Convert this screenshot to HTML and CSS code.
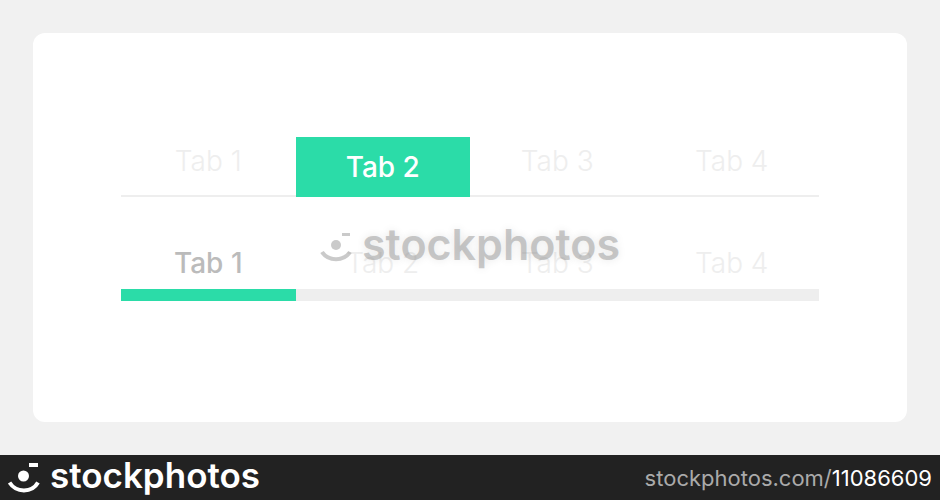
FILE: index.html
```html
<!DOCTYPE html>
<html lang="en">
  <head>
    <meta charset="utf-8" />
    <meta name="viewport" content="width=device-width, initial-scale=1" />
    <title>Tabs</title>
    <link rel="stylesheet" href="styles.css">
  </head>
  <body>
    <main class="stage">
      <section class="panel">
        <div class="tabs tabs-filled" role="tablist">
          <button class="tab" type="button" role="tab" aria-selected="false">Tab 1</button>
          <button class="tab active" type="button" role="tab" aria-selected="true">Tab 2</button>
          <button class="tab" type="button" role="tab" aria-selected="false">Tab 3</button>
          <button class="tab" type="button" role="tab" aria-selected="false">Tab 4</button>
        </div>
        <div class="tabs tabs-bar" role="tablist">
          <button class="tab active" type="button" role="tab" aria-selected="true">Tab 1</button>
          <button class="tab" type="button" role="tab" aria-selected="false">Tab 2</button>
          <button class="tab" type="button" role="tab" aria-selected="false">Tab 3</button>
          <button class="tab" type="button" role="tab" aria-selected="false">Tab 4</button>
        </div>
      </section>
    </main>
    <div class="brand watermark">
      <svg class="brand-icon" viewBox="0 0 32 30" aria-hidden="true">
        <rect x="22" y="1" width="8" height="3" />
        <circle cx="16" cy="13" r="5" />
        <path d="M2 20C8 29.5 24 29.5 30 20" />
      </svg>
      <span>stockphotos</span>
    </div>
    <footer class="footer">
      <div class="brand">
        <svg class="brand-icon" viewBox="0 0 32 30" aria-hidden="true">
          <rect x="21" y="0" width="9" height="4" />
          <circle cx="15.5" cy="13" r="5.5" />
          <path d="M1.5 19.5C8 30 24 30 30 19.5" />
        </svg>
        <span>stockphotos</span>
      </div>
      <p class="source">stockphotos.com/<span class="source-id">11086609</span></p>
    </footer>
  </body>
</html>
```
FILE: styles.css
```css
:root {
  --green: #2bdca8;
  --line: #eeeeee;
  --dark: #222222;
}

* {
  box-sizing: border-box;
}

body {
  margin: 0;
  min-height: 100vh;
  display: flex;
  flex-direction: column;
  position: relative;
  background-color: #f1f1f1;
  font-family: Inter, "Liberation Sans", sans-serif;
}

.stage {
  flex: 1;
  display: flex;
  padding: 33px;
}

.panel {
  flex: 1;
  display: flex;
  flex-direction: column;
  gap: 40px;
  padding: 104px 88px;
  background-color: white;
  border-radius: 12px;
}

.tabs {
  display: grid;
  grid-template-columns: repeat(4, 1fr);
}

.tab {
  margin: 0;
  padding: 0;
  border: 0;
  background: none;
  color: var(--line);
  font-family: inherit;
  font-size: 28px;
  font-weight: 300;
  line-height: 32px;
  cursor: pointer;
}

.tab.active {
  font-weight: 500;
}

.tabs-filled {
  height: 60px;
  box-shadow: inset 0 -2px var(--line);
}

.tabs-filled .tab {
  padding-bottom: 12px;
}

.tabs-filled .tab.active {
  padding-bottom: 0;
  background-color: var(--green);
  color: white;
}

.tabs-bar .tab {
  height: 64px;
  border-bottom: 12px solid var(--line);
}

.tabs-bar .tab.active {
  border-color: var(--green);
  color: #bbbbbb;
}

.brand {
  display: flex;
  align-items: flex-start;
  gap: 10px;
  color: white;
  font-size: 35px;
  font-weight: 600;
  line-height: 24px;
}

.brand-icon {
  width: 32px;
  height: 30px;
  fill: currentColor;
}

.brand-icon path {
  fill: none;
  stroke: currentColor;
  stroke-width: 4;
}

/* sits over the second row of tabs */
.watermark {
  position: absolute;
  top: 247px;
  left: 50%;
  transform: translate(-50%, -50%);
  color: rgba(150, 150, 150, 0.5);
  font-size: 43px;
  pointer-events: none;
  text-shadow: 0 0 8px rgba(0, 0, 0, 0.1);
}

.footer {
  display: flex;
  align-items: center;
  justify-content: space-between;
  height: 45px;
  padding: 0 8px;
  background-color: var(--dark);
}

.source {
  margin: 0;
  color: #aaaaaa;
  font-size: 22px;
  font-weight: 400;
}

.source-id {
  color: white;
}
```
